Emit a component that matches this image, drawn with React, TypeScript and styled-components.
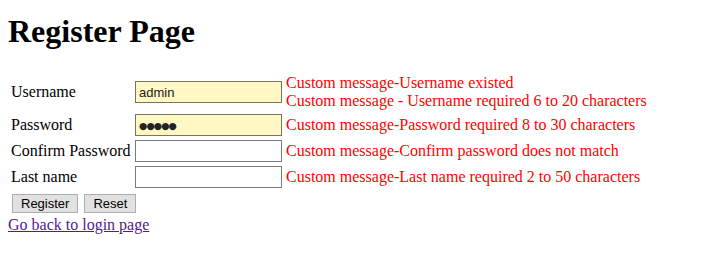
import React from 'react';
import styled, { createGlobalStyle } from 'styled-components';

const GlobalStyle = createGlobalStyle`
  body {
    margin: 8px;
    background: #fff;
    color: #000;
    font-family: 'Liberation Serif', 'Times New Roman', serif;
    font-size: 16px;
    line-height: 18px;
  }
`;

const Title = styled.h1`
  margin: 5px 0 21px;
  font-size: 32px;
  line-height: 37px;
  font-weight: bold;
`;

const Form = styled.form`
  display: grid;
  grid-template-columns: 120px 147px auto;
  column-gap: 4px;
  row-gap: 4px;
  align-items: center;
  padding: 3px;
  width: max-content;
`;

const Label = styled.label`
  white-space: nowrap;
`;

const Field = styled.input<{ $filled?: boolean; $masked?: boolean }>`
  box-sizing: border-box;
  width: 147px;
  height: 22px;
  margin: 0;
  padding: 0 3px;
  border: 1px solid ${(p) => (p.$filled ? '#7c7358' : '#7a7a7a')};
  background: ${(p) => (p.$filled ? '#fff7c4' : '#fff')};
  font-family: ${(p) =>
    p.$masked ? "'DejaVu Sans', sans-serif" : "'Liberation Sans', Arial, sans-serif"};
  font-size: ${(p) => (p.$masked ? '9.5px' : '13px')};
  letter-spacing: ${(p) => (p.$masked ? '-0.9px' : '0')};
  color: #222;
  outline: none;
`;

const Messages = styled.div`
  color: #ff0000;
  white-space: nowrap;
`;

const Actions = styled.div`
  grid-column: 1 / -1;
  display: flex;
  gap: 6px;
  padding: 2px 0 0 1px;
  height: 19px;
`;

const Button = styled.button`
  height: 19px;
  margin: 0;
  padding: 0 8px;
  border: 1px solid #adadad;
  background: #e1e1e1;
  font-family: 'Liberation Sans', Arial, sans-serif;
  font-size: 13px;
  color: #000;
`;

const BackLink = styled.a`
  color: #551a8b;
  text-decoration: underline;
`;

type Row = {
  label: string;
  value: string;
  masked?: boolean;
  errors: string[];
};

const rows: Row[] = [
  {
    label: 'Username',
    value: 'admin',
    errors: [
      'Custom message-Username existed',
      'Custom message - Username required 6 to 20 characters',
    ],
  },
  {
    label: 'Password',
    value: '●●●●●',
    masked: true,
    errors: ['Custom message-Password required 8 to 30 characters'],
  },
  {
    label: 'Confirm Password',
    value: '',
    masked: true,
    errors: ['Custom message-Confirm password does not match'],
  },
  {
    label: 'Last name',
    value: '',
    errors: ['Custom message-Last name required 2 to 50 characters'],
  },
];

export default function App() {
  return (
    <>
      <GlobalStyle />
      <Title>Register Page</Title>
      <Form onSubmit={(e) => e.preventDefault()}>
        {rows.map((row) => (
          <React.Fragment key={row.label}>
            <Label>{row.label}</Label>
            <Field
              type="text"
              defaultValue={row.value}
              $filled={row.value !== ''}
              $masked={row.masked}
            />
            <Messages>
              {row.errors.map((err) => (
                <div key={err}>{err}</div>
              ))}
            </Messages>
          </React.Fragment>
        ))}
        <Actions>
          <Button type="submit">Register</Button>
          <Button type="reset">Reset</Button>
        </Actions>
      </Form>
      <BackLink href="#">Go back to login page</BackLink>
    </>
  );
}
